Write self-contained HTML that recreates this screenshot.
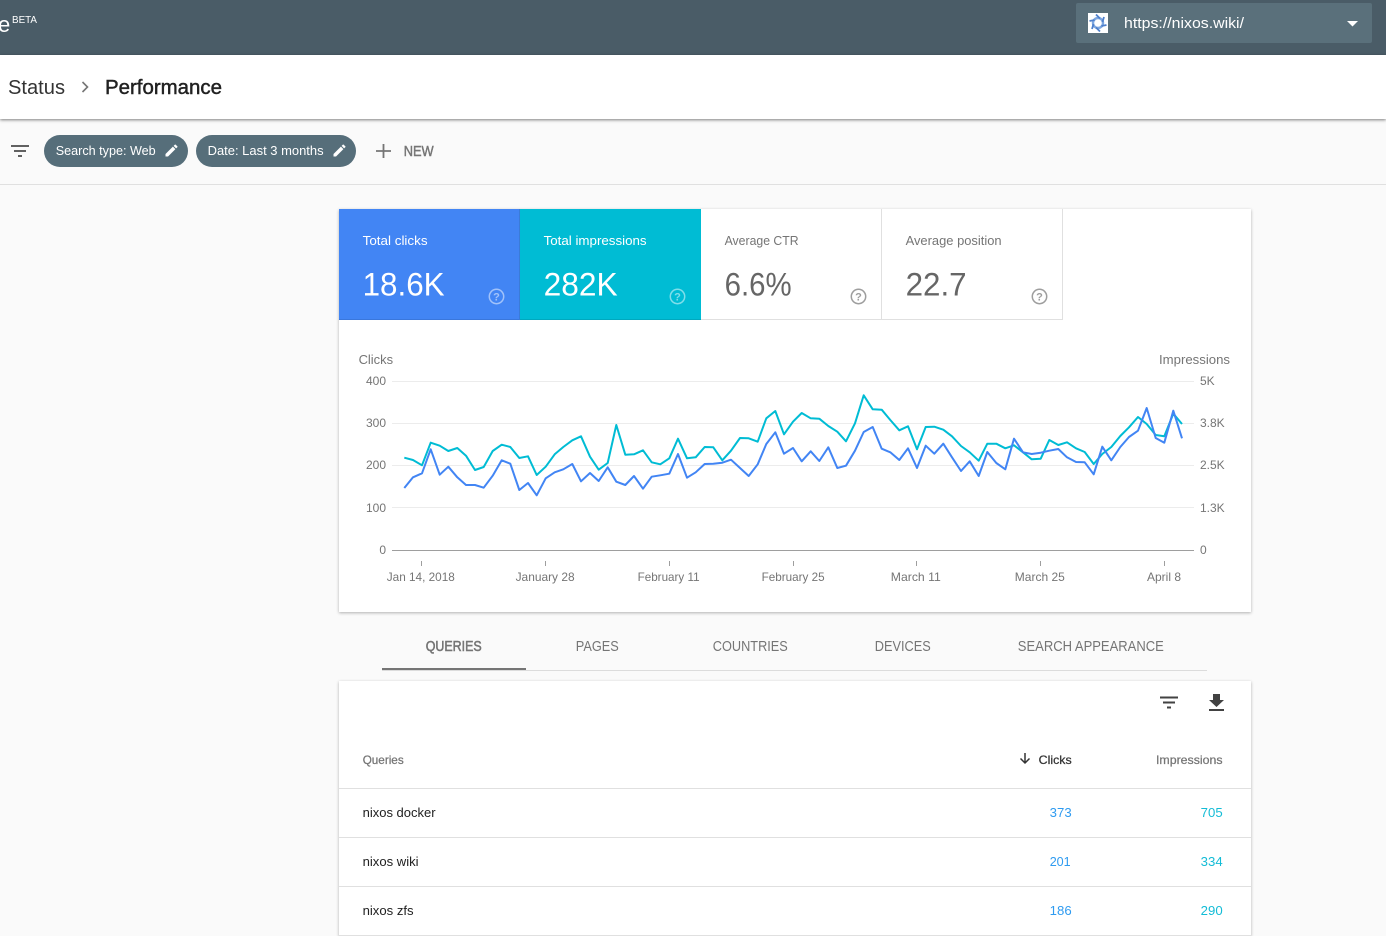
<!DOCTYPE html>
<html><head><meta charset="utf-8"><title>Performance</title>
<style>
html,body{margin:0;padding:0;width:1386px;height:936px;overflow:hidden;background:#fafafa}
.a{position:absolute}
svg{position:absolute;left:0;top:0}
text{font-family:"Liberation Sans",sans-serif;white-space:pre}
</style></head><body>
<div class="a" style="left:0;top:0;width:1386px;height:55px;background:#4a5c67"></div>
<div class="a" style="left:1076px;top:3px;width:296px;height:40px;background:#5a707b;border-radius:2px"></div>
<div class="a" style="left:0;top:55px;width:1386px;height:64px;background:#fff;box-shadow:0 1px 3px rgba(0,0,0,.5)"></div>
<div class="a" style="left:0;top:184px;width:1386px;height:1px;background:#e0e0e0"></div>
<div class="a" style="left:44px;top:135px;width:144px;height:32px;border-radius:16px;background:#566e7a"></div>
<div class="a" style="left:196px;top:135px;width:160px;height:32px;border-radius:16px;background:#566e7a"></div>
<div class="a" style="left:339px;top:209px;width:912px;height:403px;background:#fff;box-shadow:0 1px 3px rgba(0,0,0,.3)"></div>
<div class="a" style="left:339px;top:681px;width:912px;height:255px;background:#fff;box-shadow:0 1px 3px rgba(0,0,0,.3)"></div>
<div class="a" style="left:339px;top:209px;width:181px;height:110px;background:#4285f4;border-bottom:1px solid #3a77dc"></div>
<div class="a" style="left:519px;top:209px;width:1px;height:111px;background:#3a7bd8"></div>
<div class="a" style="left:520px;top:209px;width:181px;height:110px;background:#00bcd4;border-bottom:1px solid #00a8be"></div>
<div class="a" style="left:701px;top:319px;width:362px;height:1px;background:#e0e0e0"></div>
<div class="a" style="left:881px;top:209px;width:1px;height:111px;background:#e0e0e0"></div>
<div class="a" style="left:1062px;top:209px;width:1px;height:111px;background:#e0e0e0"></div>
<svg width="1386" height="936" viewBox="0 0 1386 936" xmlns="http://www.w3.org/2000/svg">
<!-- header -->
<text x="-2" y="32" font-size="22" fill="#fff">e</text>
<text x="12" y="23" font-size="10.5" fill="#fff" textLength="25" lengthAdjust="spacingAndGlyphs">BETA</text>
<rect x="1088" y="13" width="20" height="20" fill="#fff"/>
<g transform="translate(1098,23)" fill="none">
<circle r="5" stroke="#7fa8e0" stroke-width="2.400"/>
<path d="M-2 -8.500L2 -4.500M6 -6L4.500 -1M8.500 2L3.500 3M2 8.500L-2 4.500M-6 6L-4.500 1M-8.500 -2L-3.500 -3" stroke="#4f80cc" stroke-width="1.800"/>
</g>
<text x="1124" y="28" font-size="15" fill="#fff" textLength="120" lengthAdjust="spacingAndGlyphs">https://nixos.wiki/</text>
<path d="M1347 21h11l-5.500 5.500z" fill="#fff"/>
<!-- breadcrumb -->
<text x="8" y="94" font-size="20" fill="#333" textLength="57" lengthAdjust="spacingAndGlyphs">Status</text>
<path d="M82.500 82l5 5-5 5" fill="none" stroke="#757575" stroke-width="1.600"/>
<text x="105" y="94" font-size="20" fill="#212121" stroke="#212121" stroke-width=".45" textLength="117" lengthAdjust="spacingAndGlyphs">Performance</text>
<!-- filter bar -->
<path d="M11 145h18v2H11zM14 150h12v2H14zM18 155h4v2h-4z" fill="#616161"/>
<text x="55.700" y="155" font-size="13" fill="#fff" textLength="100" lengthAdjust="spacingAndGlyphs">Search type: Web</text>
<path d="M165.500 154v2.500h2.500l7.400-7.400-2.500-2.500zM177.300 147.200c.3-.3.3-.7 0-.9l-1.600-1.600c-.3-.3-.7-.3-.9 0l-1.200 1.200 2.500 2.500z" fill="#fff"/>
<text x="207.600" y="155" font-size="13" fill="#fff" textLength="116" lengthAdjust="spacingAndGlyphs">Date: Last 3 months</text>
<path d="M333.500 154v2.500h2.500l7.400-7.400-2.500-2.500zM345.300 147.200c.3-.3.3-.7 0-.9l-1.600-1.600c-.3-.3-.7-.3-.9 0l-1.200 1.200 2.500 2.500z" fill="#fff"/>
<path d="M383.500 144v14M376 151h15" stroke="#757575" stroke-width="1.800" fill="none"/>
<text x="403.700" y="156" font-size="14.500" fill="#757575" stroke="#757575" stroke-width=".45" textLength="30" lengthAdjust="spacingAndGlyphs">NEW</text>
<!-- tiles -->
<text x="362.600" y="245" font-size="13" fill="#fff" textLength="65" lengthAdjust="spacingAndGlyphs">Total clicks</text>
<text x="543.600" y="245" font-size="13" fill="#fff" textLength="103" lengthAdjust="spacingAndGlyphs">Total impressions</text>
<text x="724.600" y="245" font-size="13" fill="#757575" textLength="74" lengthAdjust="spacingAndGlyphs">Average CTR</text>
<text x="905.600" y="245" font-size="13" fill="#757575" textLength="96" lengthAdjust="spacingAndGlyphs">Average position</text>
<text x="362.600" y="295.500" font-size="32" fill="#fff" textLength="82" lengthAdjust="spacingAndGlyphs">18.6K</text>
<text x="543.600" y="295.500" font-size="32" fill="#fff" textLength="74" lengthAdjust="spacingAndGlyphs">282K</text>
<text x="724.600" y="295.500" font-size="32" fill="#666" textLength="67" lengthAdjust="spacingAndGlyphs">6.6%</text>
<text x="905.600" y="295.500" font-size="32" fill="#666" textLength="61" lengthAdjust="spacingAndGlyphs">22.7</text>
<g fill="none" stroke-width="1.500">
<circle cx="496.500" cy="296.500" r="7.200" stroke="#fff" opacity=".5"/>
<circle cx="677.500" cy="296.500" r="7.200" stroke="#fff" opacity=".5"/>
<circle cx="858.500" cy="296.500" r="7.200" stroke="#9e9e9e"/>
<circle cx="1039.500" cy="296.500" r="7.200" stroke="#9e9e9e"/>
</g>
<g font-size="11" font-weight="bold" text-anchor="middle">
<text x="496.500" y="300.500" fill="#fff" opacity=".5">?</text>
<text x="677.500" y="300.500" fill="#fff" opacity=".5">?</text>
<text x="858.500" y="300.500" fill="#9e9e9e">?</text>
<text x="1039.500" y="300.500" fill="#9e9e9e">?</text>
</g>
<!-- chart -->
<text x="358.600" y="364" font-size="13" fill="#757575" textLength="34.500" lengthAdjust="spacingAndGlyphs">Clicks</text>
<text x="1159" y="364" font-size="13" fill="#757575" textLength="71" lengthAdjust="spacingAndGlyphs">Impressions</text>
<path d="M392 381.500H1194M392 423.500H1194M392 465.500H1194M392 507.500H1194" stroke="#ececec" stroke-width="1"/>
<path d="M392 550.500H1194" stroke="#9e9e9e" stroke-width="1"/>
<path d="M421.500 561v5M545.500 561v5M669.500 561v5M793.500 561v5M916.500 561v5M1040.500 561v5M1164.500 561v5" stroke="#9e9e9e" stroke-width="1"/>
<g font-size="12" fill="#757575" text-anchor="end">
<text x="386" y="385">400</text><text x="386" y="427">300</text><text x="386" y="469">200</text><text x="386" y="512">100</text><text x="386" y="554">0</text>
</g>
<g font-size="12" fill="#757575">
<text x="1200" y="385">5K</text><text x="1200" y="427">3.8K</text><text x="1200" y="469">2.5K</text><text x="1200" y="512">1.3K</text><text x="1200" y="554">0</text>
<text x="386.800" y="581" textLength="68" lengthAdjust="spacingAndGlyphs">Jan 14, 2018</text>
<text x="515.600" y="581" textLength="59" lengthAdjust="spacingAndGlyphs">January 28</text>
<text x="637.600" y="581" textLength="62" lengthAdjust="spacingAndGlyphs">February 11</text>
<text x="761.600" y="581" textLength="63" lengthAdjust="spacingAndGlyphs">February 25</text>
<text x="890.800" y="581" textLength="50" lengthAdjust="spacingAndGlyphs">March 11</text>
<text x="1014.800" y="581" textLength="50" lengthAdjust="spacingAndGlyphs">March 25</text>
<text x="1147" y="581" textLength="34" lengthAdjust="spacingAndGlyphs">April 8</text>
</g>
<g fill="none" stroke-width="2" stroke-linejoin="round">
<polyline stroke="#00bcd4" points="404.300,457.700 413,460 422,465.300 430.700,442.700 439.700,445.700 448.300,451 457.300,448 466,455.700 475,470 483.700,467 492.700,451 501.700,444.700 510.300,447 519.300,458 528,456.300 536.700,475 545.700,466.700 554.700,454.300 563.300,447 572.300,440.300 581,436.300 590,456.700 598.700,469.700 607.700,463 616.300,425 625.300,454.700 634,454.300 643,450.300 651.700,462.300 660.300,464.300 669.300,458.300 678,438.700 687,458.300 695.700,457.300 704.700,447 713.300,447.300 722.300,460.300 731,450.700 740,438 748.700,438.300 757.700,441.700 766.300,418.300 775.300,411 784,434.300 793,421.700 801.700,413 810.700,418.300 819.300,418.700 828.300,426 837.300,431.700 846,441.300 855,423.300 863.700,395.300 872.700,409.300 881.700,409.700 890.300,420 899.300,430.300 908,426.300 917,449.300 925.700,427 934.300,426.700 943.300,429.700 952,436.300 961,446 969.700,452.300 978.700,460.700 987.300,443.700 996.300,443.700 1005.300,448.300 1014,445.300 1023,452.300 1031.700,459.300 1040.700,458.700 1049.300,440 1058.300,445 1067,442.300 1076,448.300 1084.700,452 1093.700,464 1102.300,454 1111.300,447 1120.300,436 1129,427.300 1138,417 1146.700,424 1155.700,435 1164.300,436.300 1173.300,413.700 1182,424"/>
<polyline stroke="#4285f4" points="404.300,488 413,477.300 422,473.300 430.700,449.300 439.700,474.700 448.300,466.700 457.300,477.300 466,485 475,485 483.700,487.700 492.700,475.700 501.700,460.300 510.300,463.700 519.300,490 528,483 536.700,495.300 545.700,478.300 554.700,472.300 563.300,469.300 572.300,464 581,481.300 590,473 598.700,481 607.700,467.300 616.300,481.700 625.300,485 634,476 643,488.700 651.700,476.700 660.300,475.300 669.300,473.700 678,454 687,477.700 695.700,472.300 704.700,464 713.300,463.700 722.300,462.700 731,459.700 740,468 748.700,476 757.700,464.300 766.300,444 775.300,432.300 784,453.700 793,448 801.700,461.300 810.700,451.300 819.300,461 828.300,447.300 837.300,468 846,465.700 855,450.700 863.700,432 872.700,427 881.700,448.700 890.300,452.300 899.300,460 908,448.300 917,468 925.700,445.700 934.300,453.700 943.300,443.700 952,457.300 961,471 969.700,461.300 978.700,476 987.300,452 996.300,463 1005.300,469.300 1014,438.700 1023,452.300 1031.700,454 1040.700,452.700 1049.300,450.700 1058.300,449 1067,457.300 1076,462 1084.700,462.300 1093.700,474.300 1102.300,446.700 1111.300,460.300 1120.300,447 1129,437 1138,430.700 1146.700,408 1155.700,438 1164.300,442.700 1173.300,410.700 1182,438.300"/>
</g>
<!-- tabs -->
<g font-size="14.500" fill="#757575">
<text x="425.700" y="651" stroke="#757575" stroke-width=".55" textLength="56" lengthAdjust="spacingAndGlyphs">QUERIES</text>
<text x="575.800" y="651" textLength="43" lengthAdjust="spacingAndGlyphs">PAGES</text>
<text x="712.800" y="651" textLength="75" lengthAdjust="spacingAndGlyphs">COUNTRIES</text>
<text x="874.800" y="651" textLength="56" lengthAdjust="spacingAndGlyphs">DEVICES</text>
<text x="1017.800" y="651" textLength="146" lengthAdjust="spacingAndGlyphs">SEARCH APPEARANCE</text>
</g>
<path d="M382 670.500H1207" stroke="#dcdcdc" stroke-width="1"/>
<rect x="382" y="668" width="144" height="2" fill="#757575"/>
<!-- table -->
<path d="M1160 696.500h18v2h-18zM1163 701.500h12v2h-12zM1167 706.500h4v2h-4z" fill="#424242"/>
<path d="M1213 694h7v6h4l-7.500 7-7.500-7h4zM1209 709h15v2h-15z" fill="#424242"/>
<text x="362.700" y="764" font-size="12" fill="#757575" stroke="#757575" stroke-width=".25" textLength="41" lengthAdjust="spacingAndGlyphs">Queries</text>
<path d="M1025 753v10M1020.500 758.500l4.500 4.500 4.500-4.500" fill="none" stroke="#333" stroke-width="1.500"/>
<text x="1038.700" y="764" font-size="12" fill="#333" stroke="#333" stroke-width=".25" textLength="33" lengthAdjust="spacingAndGlyphs">Clicks</text>
<text x="1156" y="764" font-size="12" fill="#757575" stroke="#757575" stroke-width=".25" textLength="66.500" lengthAdjust="spacingAndGlyphs">Impressions</text>
<path d="M339 788.500H1251M339 837.500H1251M339 886.500H1251M339 935.500H1251" stroke="#e0e0e0" stroke-width="1"/>
<g font-size="13" fill="#212121">
<text x="362.600" y="817" textLength="73" lengthAdjust="spacingAndGlyphs">nixos docker</text>
<text x="362.600" y="866" textLength="56" lengthAdjust="spacingAndGlyphs">nixos wiki</text>
<text x="362.600" y="915" textLength="51" lengthAdjust="spacingAndGlyphs">nixos zfs</text>
</g>
<g font-size="13" fill="#2f9bf0">
<text x="1049.700" y="817" textLength="22" lengthAdjust="spacingAndGlyphs">373</text>
<text x="1049.700" y="866" textLength="21" lengthAdjust="spacingAndGlyphs">201</text>
<text x="1049.700" y="915" textLength="22" lengthAdjust="spacingAndGlyphs">186</text>
</g>
<g font-size="13" fill="#14bcd6">
<text x="1200.700" y="817" textLength="22" lengthAdjust="spacingAndGlyphs">705</text>
<text x="1200.700" y="866" textLength="22" lengthAdjust="spacingAndGlyphs">334</text>
<text x="1200.700" y="915" textLength="22" lengthAdjust="spacingAndGlyphs">290</text>
</g>
</svg>
</body></html>
